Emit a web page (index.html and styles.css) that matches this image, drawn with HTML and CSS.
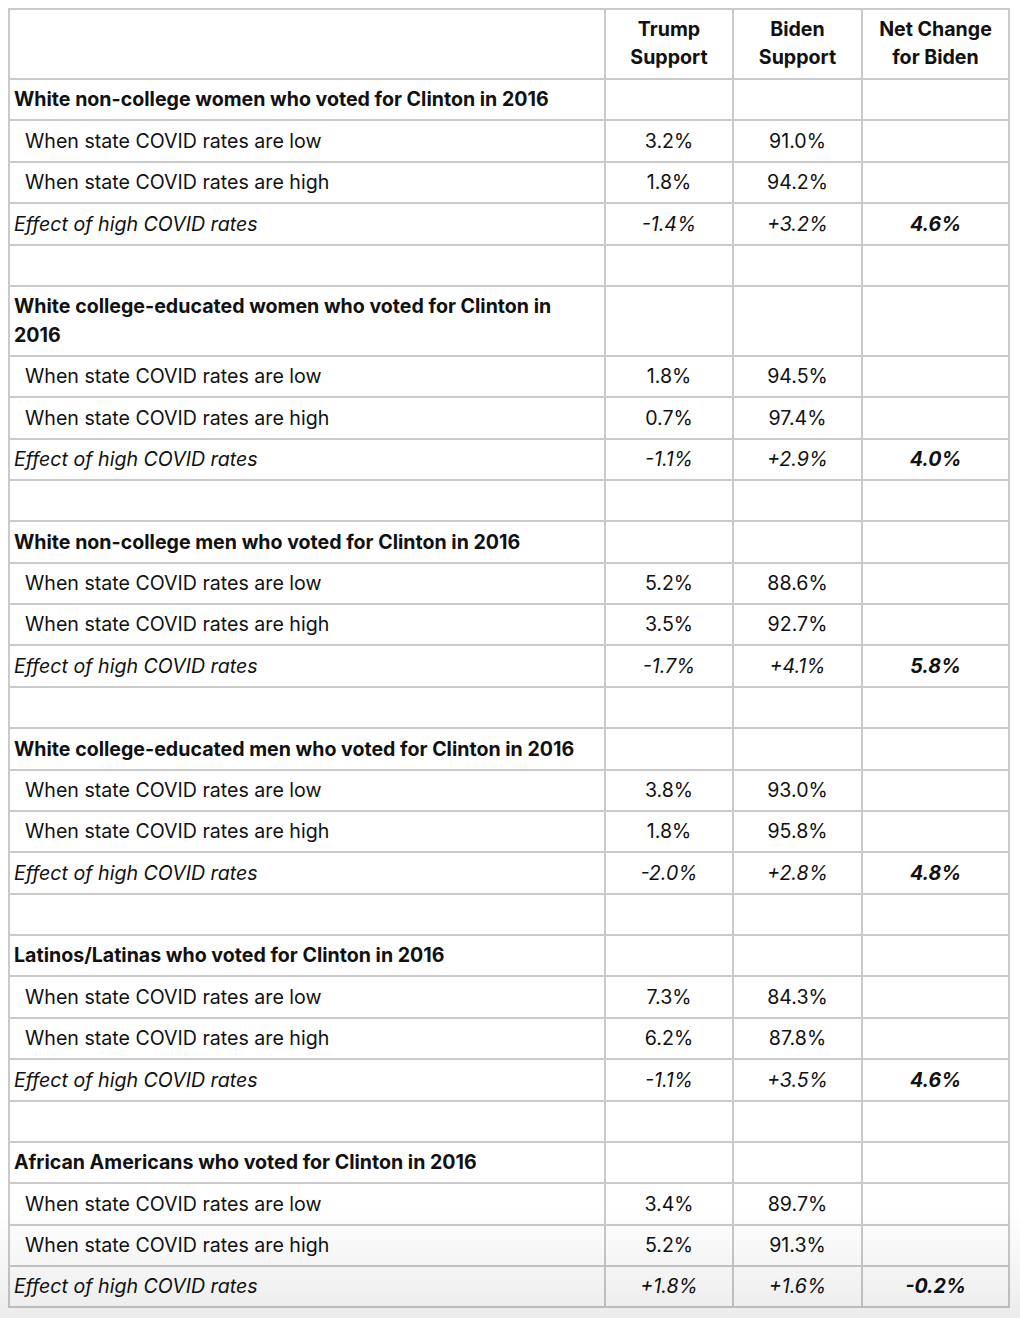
FILE: index.html
```html
<!DOCTYPE html>
<html lang="en">
<head>
<meta charset="utf-8">
<title>COVID rates and support</title>
<link rel="stylesheet" href="styles.css">
</head>
<body>
<table class="data">
  <colgroup>
    <col class="c-label">
    <col class="c-num">
    <col class="c-num2">
    <col class="c-net">
  </colgroup>
  <thead>
    <tr class="head">
      <th></th>
      <th>Trump<br>Support</th>
      <th>Biden<br>Support</th>
      <th>Net Change<br>for Biden</th>
    </tr>
  </thead>
  <tbody>
    <tr class="group"><td>White non-college women who voted for Clinton in 2016</td><td></td><td></td><td></td></tr>
    <tr class="row"><td>When state COVID rates are low</td><td>3.2%</td><td>91.0%</td><td></td></tr>
    <tr class="row"><td>When state COVID rates are high</td><td>1.8%</td><td>94.2%</td><td></td></tr>
    <tr class="effect"><td>Effect of high COVID rates</td><td>-1.4%</td><td>+3.2%</td><td class="net">4.6%</td></tr>
    <tr class="spacer"><td></td><td></td><td></td><td></td></tr>

    <tr class="group"><td>White college-educated women who voted for Clinton in 2016</td><td></td><td></td><td></td></tr>
    <tr class="row"><td>When state COVID rates are low</td><td>1.8%</td><td>94.5%</td><td></td></tr>
    <tr class="row"><td>When state COVID rates are high</td><td>0.7%</td><td>97.4%</td><td></td></tr>
    <tr class="effect"><td>Effect of high COVID rates</td><td>-1.1%</td><td>+2.9%</td><td class="net">4.0%</td></tr>
    <tr class="spacer"><td></td><td></td><td></td><td></td></tr>

    <tr class="group"><td>White non-college men who voted for Clinton in 2016</td><td></td><td></td><td></td></tr>
    <tr class="row"><td>When state COVID rates are low</td><td>5.2%</td><td>88.6%</td><td></td></tr>
    <tr class="row"><td>When state COVID rates are high</td><td>3.5%</td><td>92.7%</td><td></td></tr>
    <tr class="effect"><td>Effect of high COVID rates</td><td>-1.7%</td><td>+4.1%</td><td class="net">5.8%</td></tr>
    <tr class="spacer"><td></td><td></td><td></td><td></td></tr>

    <tr class="group"><td>White college-educated men who voted for Clinton in 2016</td><td></td><td></td><td></td></tr>
    <tr class="row"><td>When state COVID rates are low</td><td>3.8%</td><td>93.0%</td><td></td></tr>
    <tr class="row"><td>When state COVID rates are high</td><td>1.8%</td><td>95.8%</td><td></td></tr>
    <tr class="effect"><td>Effect of high COVID rates</td><td>-2.0%</td><td>+2.8%</td><td class="net">4.8%</td></tr>
    <tr class="spacer"><td></td><td></td><td></td><td></td></tr>

    <tr class="group"><td>Latinos/Latinas who voted for Clinton in 2016</td><td></td><td></td><td></td></tr>
    <tr class="row"><td>When state COVID rates are low</td><td>7.3%</td><td>84.3%</td><td></td></tr>
    <tr class="row"><td>When state COVID rates are high</td><td>6.2%</td><td>87.8%</td><td></td></tr>
    <tr class="effect"><td>Effect of high COVID rates</td><td>-1.1%</td><td>+3.5%</td><td class="net">4.6%</td></tr>
    <tr class="spacer"><td></td><td></td><td></td><td></td></tr>

    <tr class="group"><td>African Americans who voted for Clinton in 2016</td><td></td><td></td><td></td></tr>
    <tr class="row"><td>When state COVID rates are low</td><td>3.4%</td><td>89.7%</td><td></td></tr>
    <tr class="row"><td>When state COVID rates are high</td><td>5.2%</td><td>91.3%</td><td></td></tr>
    <tr class="effect"><td>Effect of high COVID rates</td><td>+1.8%</td><td>+1.6%</td><td class="net">-0.2%</td></tr>
  </tbody>
</table>
<div class="fade"></div>
</body>
</html>
```

FILE: styles.css
```css
html, body {
  margin: 0;
  padding: 0;
  background: #fff;
}
body {
  padding: 8px;
  font-family: Inter, "Open Sans", Arial, sans-serif;
  color: #111;
  font-size: 19.6px;
  line-height: 28.6px;
}
.data {
  border-collapse: collapse;
  width: 1000px;
  table-layout: fixed;
  border: 2px solid #cacaca;
}
.c-label { width: 596px; }
.c-num { width: 128px; }
.c-num2 { width: 129px; }
.c-net { width: 147px; }

.data th,
.data td {
  border: 2px solid #cacaca;
  padding: 5.4px 4px;
  vertical-align: middle;
  height: 28.6px;
}
.data th {
  font-weight: 700;
  text-align: center;
  line-height: 28px;
  padding: 5px 4px 7px;
}
.data td + td {
  text-align: center;
}
.group td:first-child {
  font-weight: 700;
}
.row td:first-child {
  padding-left: 15px;
}
.effect td {
  font-style: italic;
}
.effect .net {
  font-weight: 700;
}
.fade {
  position: fixed;
  left: 0;
  right: 0;
  bottom: 0;
  height: 110px;
  pointer-events: none;
  background: linear-gradient(to bottom, rgba(0,0,0,0), rgba(0,0,0,0.075));
}
```
